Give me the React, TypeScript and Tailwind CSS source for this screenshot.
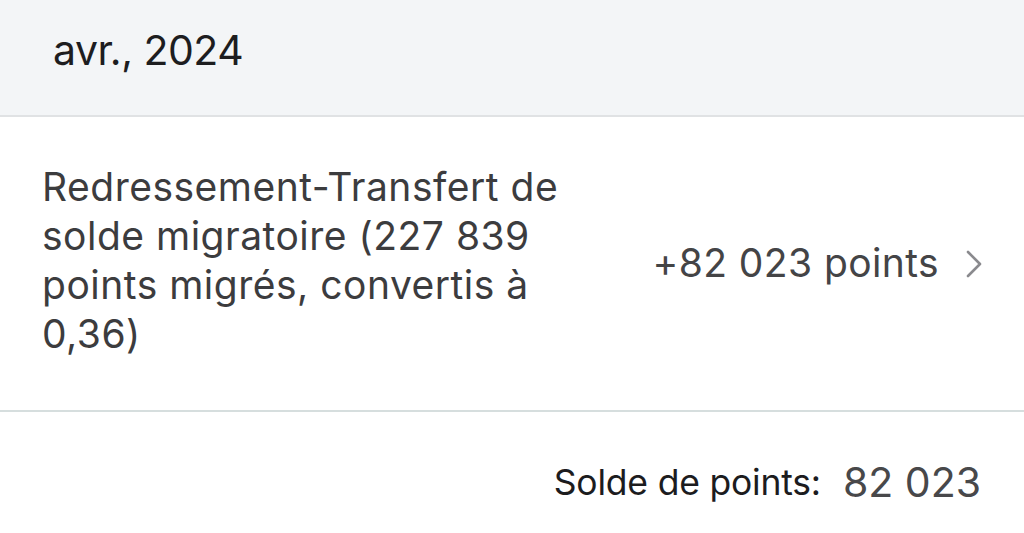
export default function App() {
  return (
    <div className="w-[1024px] h-[533px] bg-white overflow-hidden" style={{ fontFamily: "Inter, 'Noto Sans', sans-serif" }}>
      <div className="h-[117px] bg-[#f3f5f7] border-b-2 border-[#e0e2e4] flex items-center pl-[53px] pb-[14px]">
        <span className="text-[41px] text-[#1d1d1f] tracking-[-0.5px]">avr., 2024</span>
      </div>
      <div className="h-[295px] border-b-2 border-[#d6dede] flex items-center justify-between pl-[42px] pr-[42px]">
        <div className="text-[39px] leading-[49px] text-[#3c3c3e] tracking-[0.5px] pb-[8px]">
          <div>Redressement-Transfert de</div>
          <div>solde migratoire (227 839</div>
          <div>points migrés, convertis à</div>
          <div>0,36)</div>
        </div>
        <div className="flex items-center gap-[27px] text-[39px] text-[#444446] tracking-[0.4px]">
          <span>+82 023 points</span>
          <svg width="16" height="28" viewBox="0 0 16 28" fill="none">
            <path d="M2 2 L14 14 L2 26" stroke="#8a8a8e" strokeWidth="2.6" strokeLinecap="round" strokeLinejoin="round" />
          </svg>
        </div>
      </div>
      <div className="flex items-center justify-end pr-[43px] pt-[40px]">
        <span className="text-[35.5px] text-[#1c1c1e] tracking-[-0.2px]">Solde de points:</span>
        <span className="ml-[22px] text-[41px] text-[#48484a] tracking-[0px]">82 023</span>
      </div>
    </div>
  );
}
